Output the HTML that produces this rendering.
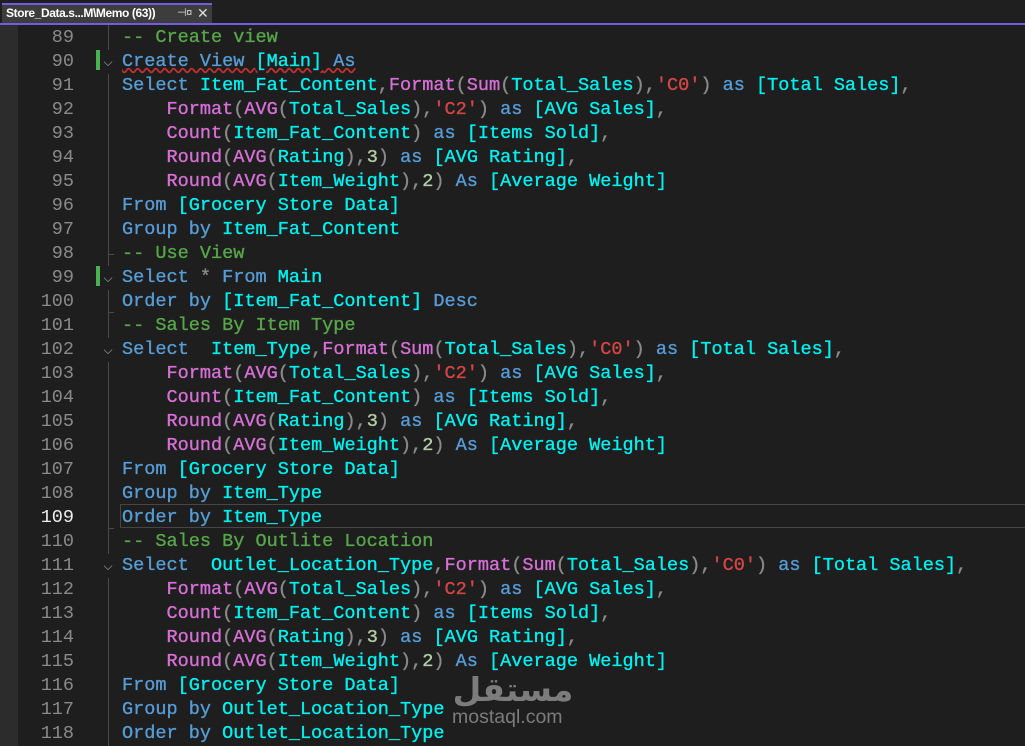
<!DOCTYPE html>
<html><head><meta charset="utf-8"><style>
body{margin:0;width:1025px;height:746px;background:#1e1e1e;overflow:hidden;position:relative;font-family:"Liberation Mono",monospace}
.top{position:absolute;left:0;top:0;width:1025px;height:23px;background:#1f1f1f}
.tab{position:absolute;left:2px;top:3px;width:210px;height:20px;background:#3d3d3d;border-top:2px solid #6f5fe0;box-sizing:border-box;font-family:"Liberation Sans",sans-serif;font-size:12px;font-weight:bold;color:#fff;line-height:17px;padding-left:4px;letter-spacing:-0.4px}
.tab .x{position:absolute;left:195px;top:0;font-weight:normal;color:#ddd;font-size:14px}
.tab .pin{position:absolute;left:175px;top:0;font-weight:normal;color:#ddd;font-size:11px}
.bar{position:absolute;left:0;top:23px;width:1025px;height:2px;background:#6f5fe0}
.strip{position:absolute;left:0;top:25px;width:18px;height:721px;background:#2c2c2c}
.vl{position:absolute;left:108px;top:25px;width:1px;height:721px;background:#4a4a4a}
.ln{position:absolute;left:20px;width:54px;text-align:right;font-size:18.5px;line-height:24px;color:#8a8a8a;margin-top:2px}
.ln.cur{color:#eee}
.code{position:absolute;left:122px;font-size:18.55px;line-height:24px;white-space:pre;color:#dcdcdc;margin-top:2px;-webkit-text-stroke:0.35px currentColor}
.k{color:#569cd6}.c{color:#57a64a}.i{color:#00f0f0}.f{color:#d670d6}.s{color:#d64545}.p{color:#8a8a8a}.n{color:#b5cea8}
.g{position:absolute;left:96px;width:4px;height:20px;background:#4caf50}
.chev{position:absolute;left:102px;width:12px;color:#aaa;font-size:12px;font-family:"DejaVu Sans",sans-serif;background:#1e1e1e;text-align:center;line-height:24px}
.tick{position:absolute;left:108px;width:6px;height:1px;background:#4a4a4a}
.curbox{position:absolute;left:120px;top:504px;width:905px;height:22px;border:1px solid #464646}
.wm{position:absolute;left:452px;top:670px;font-family:"Liberation Sans",sans-serif;color:#7c7c7c}
</style></head><body>
<div class="top"></div>
<div class="tab">Store_Data.s...M\Memo (63))<span class="pin">⊣¤</span><span class="x">✕</span></div>
<div class="bar"></div>
<div class="strip"></div>
<div class="vl"></div>
<div class="curbox"></div>
<div class="g" style="top:50px"></div><div class="g" style="top:266px"></div>
<div class="chev" style="top:50px">⌵</div><div class="chev" style="top:266px">⌵</div><div class="chev" style="top:338px">⌵</div><div class="chev" style="top:554px">⌵</div>
<div class="tick" style="top:254px"></div><div class="tick" style="top:312px"></div><div class="tick" style="top:528px"></div>
<div class="ln" style="top:24px">89</div><div class="ln" style="top:48px">90</div><div class="ln" style="top:72px">91</div><div class="ln" style="top:96px">92</div><div class="ln" style="top:120px">93</div><div class="ln" style="top:144px">94</div><div class="ln" style="top:168px">95</div><div class="ln" style="top:192px">96</div><div class="ln" style="top:216px">97</div><div class="ln" style="top:240px">98</div><div class="ln" style="top:264px">99</div><div class="ln" style="top:288px">100</div><div class="ln" style="top:312px">101</div><div class="ln" style="top:336px">102</div><div class="ln" style="top:360px">103</div><div class="ln" style="top:384px">104</div><div class="ln" style="top:408px">105</div><div class="ln" style="top:432px">106</div><div class="ln" style="top:456px">107</div><div class="ln" style="top:480px">108</div><div class="ln cur" style="top:504px">109</div><div class="ln" style="top:528px">110</div><div class="ln" style="top:552px">111</div><div class="ln" style="top:576px">112</div><div class="ln" style="top:600px">113</div><div class="ln" style="top:624px">114</div><div class="ln" style="top:648px">115</div><div class="ln" style="top:672px">116</div><div class="ln" style="top:696px">117</div><div class="ln" style="top:720px">118</div>
<div class="code" style="top:24px"><span class="c">-- Create view</span>
<span class="k" style="text-decoration:underline wavy #c03030">Create View <span class="i">[Main]</span> As</span>
<span class="k">Select</span> <span class="i">Item_Fat_Content</span><span class="p">,</span><span class="f">Format</span><span class="p">(</span><span class="f">Sum</span><span class="p">(</span><span class="i">Total_Sales</span><span class="p">),</span><span class="s">'C0'</span><span class="p">)</span> <span class="k">as</span> <span class="i">[Total Sales]</span><span class="p">,</span>
    <span class="f">Format</span><span class="p">(</span><span class="f">AVG</span><span class="p">(</span><span class="i">Total_Sales</span><span class="p">),</span><span class="s">'C2'</span><span class="p">)</span> <span class="k">as</span> <span class="i">[AVG Sales]</span><span class="p">,</span>
    <span class="f">Count</span><span class="p">(</span><span class="i">Item_Fat_Content</span><span class="p">)</span> <span class="k">as</span> <span class="i">[Items Sold]</span><span class="p">,</span>
    <span class="f">Round</span><span class="p">(</span><span class="f">AVG</span><span class="p">(</span><span class="i">Rating</span><span class="p">),</span><span class="n">3</span><span class="p">)</span> <span class="k">as</span> <span class="i">[AVG Rating]</span><span class="p">,</span>
    <span class="f">Round</span><span class="p">(</span><span class="f">AVG</span><span class="p">(</span><span class="i">Item_Weight</span><span class="p">),</span><span class="n">2</span><span class="p">)</span> <span class="k">As</span> <span class="i">[Average Weight]</span>
<span class="k">From</span> <span class="i">[Grocery Store Data]</span>
<span class="k">Group by</span> <span class="i">Item_Fat_Content</span>
<span class="c">-- Use View</span>
<span class="k">Select</span> <span class="p">*</span> <span class="k">From</span> <span class="i">Main</span>
<span class="k">Order by</span> <span class="i">[Item_Fat_Content]</span> <span class="k">Desc</span>
<span class="c">-- Sales By Item Type</span>
<span class="k">Select</span>  <span class="i">Item_Type</span><span class="p">,</span><span class="f">Format</span><span class="p">(</span><span class="f">Sum</span><span class="p">(</span><span class="i">Total_Sales</span><span class="p">),</span><span class="s">'C0'</span><span class="p">)</span> <span class="k">as</span> <span class="i">[Total Sales]</span><span class="p">,</span>
    <span class="f">Format</span><span class="p">(</span><span class="f">AVG</span><span class="p">(</span><span class="i">Total_Sales</span><span class="p">),</span><span class="s">'C2'</span><span class="p">)</span> <span class="k">as</span> <span class="i">[AVG Sales]</span><span class="p">,</span>
    <span class="f">Count</span><span class="p">(</span><span class="i">Item_Fat_Content</span><span class="p">)</span> <span class="k">as</span> <span class="i">[Items Sold]</span><span class="p">,</span>
    <span class="f">Round</span><span class="p">(</span><span class="f">AVG</span><span class="p">(</span><span class="i">Rating</span><span class="p">),</span><span class="n">3</span><span class="p">)</span> <span class="k">as</span> <span class="i">[AVG Rating]</span><span class="p">,</span>
    <span class="f">Round</span><span class="p">(</span><span class="f">AVG</span><span class="p">(</span><span class="i">Item_Weight</span><span class="p">),</span><span class="n">2</span><span class="p">)</span> <span class="k">As</span> <span class="i">[Average Weight]</span>
<span class="k">From</span> <span class="i">[Grocery Store Data]</span>
<span class="k">Group by</span> <span class="i">Item_Type</span>
<span class="k">Order by</span> <span class="i">Item_Type</span>
<span class="c">-- Sales By Outlite Location</span>
<span class="k">Select</span>  <span class="i">Outlet_Location_Type</span><span class="p">,</span><span class="f">Format</span><span class="p">(</span><span class="f">Sum</span><span class="p">(</span><span class="i">Total_Sales</span><span class="p">),</span><span class="s">'C0'</span><span class="p">)</span> <span class="k">as</span> <span class="i">[Total Sales]</span><span class="p">,</span>
    <span class="f">Format</span><span class="p">(</span><span class="f">AVG</span><span class="p">(</span><span class="i">Total_Sales</span><span class="p">),</span><span class="s">'C2'</span><span class="p">)</span> <span class="k">as</span> <span class="i">[AVG Sales]</span><span class="p">,</span>
    <span class="f">Count</span><span class="p">(</span><span class="i">Item_Fat_Content</span><span class="p">)</span> <span class="k">as</span> <span class="i">[Items Sold]</span><span class="p">,</span>
    <span class="f">Round</span><span class="p">(</span><span class="f">AVG</span><span class="p">(</span><span class="i">Rating</span><span class="p">),</span><span class="n">3</span><span class="p">)</span> <span class="k">as</span> <span class="i">[AVG Rating]</span><span class="p">,</span>
    <span class="f">Round</span><span class="p">(</span><span class="f">AVG</span><span class="p">(</span><span class="i">Item_Weight</span><span class="p">),</span><span class="n">2</span><span class="p">)</span> <span class="k">As</span> <span class="i">[Average Weight]</span>
<span class="k">From</span> <span class="i">[Grocery Store Data]</span>
<span class="k">Group by</span> <span class="i">Outlet_Location_Type</span>
<span class="k">Order by</span> <span class="i">Outlet_Location_Type</span></div>
<div class="wm"><div style="font-family:'Noto Sans CJK SC','DejaVu Sans',sans-serif;font-size:33px;font-weight:bold;line-height:34px;text-align:center;width:122px">مستقل</div><div style="font-size:19.5px;line-height:22px;margin-top:2px">mostaql.com</div></div>
</body></html>
